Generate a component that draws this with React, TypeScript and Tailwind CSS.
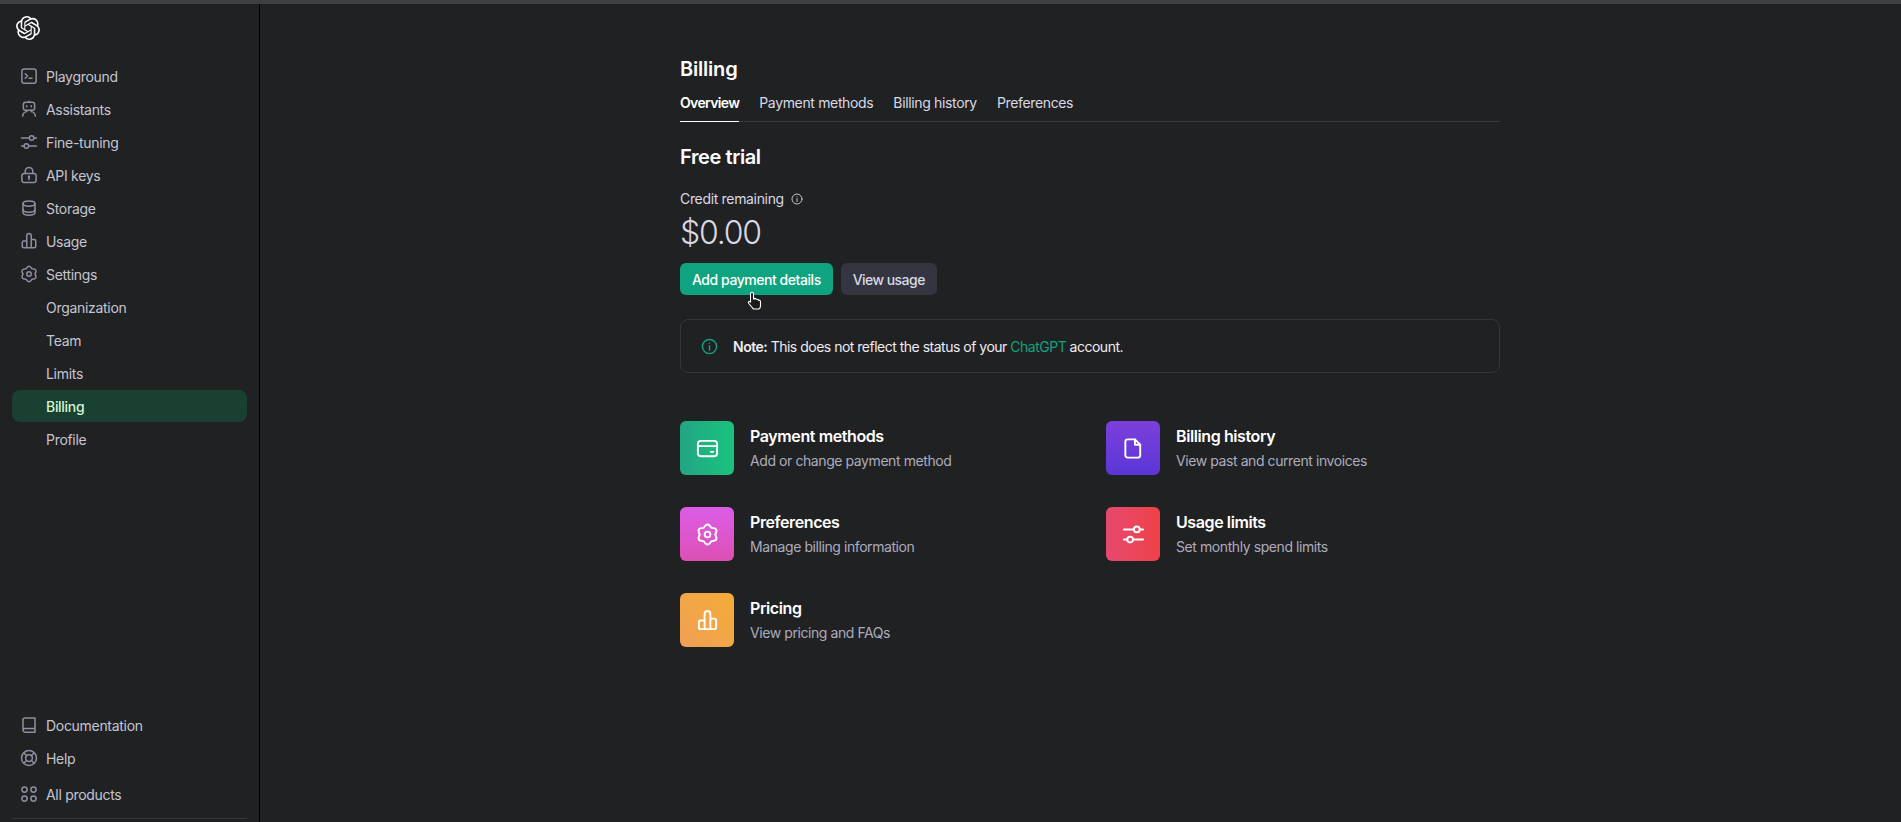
import React from "react";
import { SiOpenai } from "react-icons/si";

type P = { className?: string };
const Svg = ({ className, children }: P & { children: React.ReactNode }) => (
  <svg viewBox="0 0 24 24" fill="none" stroke="currentColor" strokeWidth={2} strokeLinecap="round" strokeLinejoin="round" className={className}>
    {children}
  </svg>
);
const Terminal = (p: P) => (
  <Svg {...p}>
    <rect x="2.5" y="2.5" width="19" height="19" rx="3" />
    <path d="M7 9l3 3-3 3M12 15h4" />
  </Svg>
);
const Robot = (p: P) => (
  <Svg {...p}>
    <path d="M12 1.500v1.500" />
    <rect x="4.500" y="3" width="15" height="10.500" rx="3" />
    <path d="M9 7.500v1.500M15 7.500v1.500M9 13.500v2c-3 .3-5 2.500-5.500 6M15 13.500v2c3 .3 5 2.500 5.500 6" />
  </Svg>
);
const Sliders = (p: P) => (
  <Svg {...p}>
    <path d="M2 6.700h10.500M18.500 6.700h3.500M2 17.300h3.500M11.500 17.300h10.500" />
    <circle cx="15.500" cy="6.700" r="3" />
    <circle cx="8.500" cy="17.300" r="3" />
  </Svg>
);
const Lock = (p: P) => (
  <Svg {...p}>
    <rect x="2.500" y="10" width="19" height="12" rx="3" />
    <path d="M7 10V7a5 5 0 0 1 10 0v3" />
    <path d="M12 15v3" />
    <circle cx="12" cy="14.500" r=".7" />
  </Svg>
);
const Db = (p: P) => (
  <Svg {...p}>
    <path d="M4 6c0-2 3-3.500 8-3.500S20 4 20 6v12c0 2-3 3.500-8 3.500S4 20 4 18z" />
    <path d="M4 6c0 2 3 3.500 8 3.500S20 8 20 6M4 14c0 2 3 3.500 8 3.500s8-1.500 8-3.500" />
  </Svg>
);
const Bars = (p: P) => (
  <Svg {...p}>
    <path d="M9 21V5a3 3 0 0 1 6 0v16M15 10h4a2 2 0 0 1 2 2v7a2 2 0 0 1-2 2H5a2 2 0 0 1-2-2v-5a2 2 0 0 1 2-2h4" />
  </Svg>
);
const Gear = (p: P) => (
  <Svg {...p}>
    <path d="M8 5.070Q12 -2 16 5.070Q24.120 5 20 12Q24.120 19 16 18.930Q12 26 8 18.930Q-.12 19 4 12Q-.12 5 8 5.070Z" />
    <circle cx="12" cy="12" r="3" />
  </Svg>
);
const Book = (p: P) => (
  <Svg {...p}>
    <path d="M4 19V5a2.500 2.500 0 0 1 2.500-2.500H20V21.500H6.500A2.500 2.500 0 0 1 4 19a2.500 2.500 0 0 1 2.500-2.500H20" />
  </Svg>
);
const Lifebuoy = (p: P) => (
  <Svg {...p}>
    <circle cx="12" cy="12" r="10" />
    <circle cx="12" cy="12" r="4.500" />
    <path d="M5 5l4 4M19 5l-4 4M5 19l4-4M19 19l-4-4" />
  </Svg>
);
const Grid4 = (p: P) => (
  <Svg {...p}>
    <circle cx="6" cy="6" r="3.500" />
    <circle cx="18" cy="6" r="3.500" />
    <circle cx="6" cy="18" r="3.500" />
    <circle cx="18" cy="18" r="3.500" />
  </Svg>
);
const Info = (p: P) => (
  <Svg {...p}>
    <circle cx="12" cy="12" r="10" />
    <path d="M12 11v6M12 7.500v.01" />
  </Svg>
);
const Card = (p: P) => (
  <Svg {...p}>
    <rect x="2" y="4" width="20" height="16" rx="3" />
    <path d="M2 9.500h20M15.500 15.500h2.500" />
  </Svg>
);
const FileIco = (p: P) => (
  <Svg {...p}>
    <path d="M6 2.500h7.500l5.500 5.500v11a2.500 2.500 0 0 1-2.500 2.500h-10.500a2.500 2.500 0 0 1-2.500-2.500V5A2.500 2.500 0 0 1 6 2.500z" />
    <path d="M13.500 2.500V8H19" />
  </Svg>
);

const NavRow = ({ icon: Icon, label, active }: { icon?: (p: P) => React.ReactElement; label: string; active?: boolean }) => (
  <div className={`flex h-[32px] items-center rounded-[8px] pl-[8px] tracking-[-0.3px] ${active ? "bg-[#1a4032] text-[#d2f4d3]" : "text-[#c5c5d2]"}`}>
    <span className="flex w-[26px] shrink-0 items-center">
      {Icon ? <Icon className="h-[18px] w-[18px] text-[#8e8ea0]" /> : null}
    </span>
    <span className={active ? "font-medium" : ""}>{label}</span>
  </div>
);

const Tile = ({
  gradient,
  icon: Icon,
  title,
  sub,
}: {
  gradient: string;
  icon: (p: P) => React.ReactElement;
  title: string;
  sub: string;
}) => (
  <div className="flex items-center">
    <div className={`flex h-[54px] w-[54px] shrink-0 items-center justify-center rounded-[6px] ${gradient}`}>
      <Icon className="h-[23px] w-[23px] text-white" />
    </div>
    <div className="ml-[16px] flex flex-col gap-[1px]">
      <div className="text-[16px] font-semibold leading-[24px] tracking-[-0.4px] text-white">{title}</div>
      <div className="text-[14px] leading-[24px] tracking-[-0.42px] text-[#acacbe]">{sub}</div>
    </div>
  </div>
);

export default function App() {
  return (
    <div
      className="flex h-[822px] flex-col overflow-hidden bg-[#202123] text-[14px]"
      style={{ fontFamily: "Inter, 'Liberation Sans', sans-serif" }}
    >
      <div className="h-[4px] shrink-0 bg-[#3e3f42]" />
      <div className="flex min-h-0 flex-1">
        <aside className="flex w-[260px] shrink-0 flex-col border-r border-r-[#000000] pl-[12px] pr-[12px]">
          <SiOpenai className="ml-[4px] mt-[12px] h-[24px] w-[24px] shrink-0 text-white" />
          <nav className="mt-[20px] flex flex-col gap-[1px]">
            <NavRow icon={Terminal} label="Playground" />
            <NavRow icon={Robot} label="Assistants" />
            <NavRow icon={Sliders} label="Fine-tuning" />
            <NavRow icon={Lock} label="API keys" />
            <NavRow icon={Db} label="Storage" />
            <NavRow icon={Bars} label="Usage" />
            <NavRow icon={Gear} label="Settings" />
            <NavRow label="Organization" />
            <NavRow label="Team" />
            <NavRow label="Limits" />
            <NavRow active label="Billing" />
            <NavRow label="Profile" />
          </nav>
          <div className="mt-auto flex flex-col gap-[1px]">
            <NavRow icon={Book} label="Documentation" />
            <NavRow icon={Lifebuoy} label="Help" />
            <div className="mt-[3px]">
              <NavRow icon={Grid4} label="All products" />
            </div>
            <div className="mb-[3px] mt-[7px] h-[1px] bg-[#343541]" />
          </div>
        </aside>
        <main className="min-w-0 flex-1 pl-[420px]">
          <div className="w-[820px]">
            <h1 className="mt-[52px] text-[20px] font-semibold leading-[26px] tracking-[-0.2px] text-white">Billing</h1>
            <div className="mt-[9px] flex gap-[20px] border-b border-b-[#3a3b3f] leading-[24px] tracking-[-0.35px]">
              <span className="-mb-[1px] border-b border-b-white pb-[6px] font-semibold tracking-[-0.65px] text-white">Overview</span>
              <span className="text-[#d9d9e3]">Payment methods</span>
              <span className="text-[#d9d9e3]">Billing history</span>
              <span className="text-[#d9d9e3]">Preferences</span>
            </div>
            <h2 className="mt-[21px] text-[20px] font-semibold leading-[28px] tracking-[-0.4px] text-white">Free trial</h2>
            <div className="mt-[18px] flex items-center gap-[7px] leading-[20px] tracking-[-0.33px] text-[#d9d9e3]">
              Credit remaining
              <Info className="h-[12px] w-[12px] text-[#c5c5d2]" />
            </div>
            <div className="mt-[4px] text-[32px] font-light leading-[39px] tracking-[-1.2px] text-[#d9d9e3]">$0.00</div>
            <div className="relative mt-[11px] flex gap-[8px]">
              <button className="flex h-[32px] items-center rounded-[6px] bg-[#10a37f] px-[12px] font-medium tracking-[-0.45px] text-white">Add payment details</button>
              <button className="flex h-[32px] items-center rounded-[6px] bg-[#343541] px-[12px] font-medium tracking-[-0.55px] text-[#d9d9e3]">View usage</button>
              <svg viewBox="0 0 18 20" className="absolute left-[67px] top-[28px] h-[20px] w-[18px]">
                <path
                  d="M5 1.200c.9 0 1.500.6 1.500 1.500v5.300h1v-.8c1 0 1.400.4 1.500 1h1c.9 0 1.200.4 1.300 1 1.400-.2 2.200.5 2.200 1.700v3.800c0 1.500-.7 2.800-1.500 3.300H6.500c-1.500-1.500-3-3.500-5-6-.6-.9.3-2 1.600-1.200l.4.4V2.700c0-.9.600-1.500 1.500-1.500z"
                  fill="#1a1a1a"
                  stroke="#ffffff"
                  strokeWidth="1.100"
                  strokeLinejoin="round"
                />
              </svg>
            </div>
            <div className="mt-[24px] flex h-[54px] items-center rounded-[8px] border border-[#343541] pl-[20px] tracking-[-0.5px] text-[#ececf1]">
              <Info className="h-[17px] w-[17px] text-[#10a37f]" />
              <span className="ml-[15px]">
                <b className="font-semibold">Note:</b> This does not reflect the status of your <span className="text-[#10a37f]">ChatGPT</span> account.
              </span>
            </div>
            <div className="mt-[48px] grid grid-cols-[426px_1fr] gap-y-[32px]">
              <Tile gradient="bg-gradient-to-r from-[#23a584] to-[#19c37d]" icon={Card} title="Payment methods" sub="Add or change payment method" />
              <Tile gradient="bg-gradient-to-t from-[#5a36d6] to-[#7c3fdc]" icon={FileIco} title="Billing history" sub="View past and current invoices" />
              <Tile gradient="bg-gradient-to-b from-[#dc5ce8] to-[#dd4fb3]" icon={Gear} title="Preferences" sub="Manage billing information" />
              <Tile gradient="bg-gradient-to-r from-[#e6496f] to-[#ef4146]" icon={Sliders} title="Usage limits" sub="Set monthly spend limits" />
              <Tile gradient="bg-gradient-to-tr from-[#f09f54] to-[#f4ac36]" icon={Bars} title="Pricing" sub="View pricing and FAQs" />
            </div>
          </div>
        </main>
      </div>
    </div>
  );
}
